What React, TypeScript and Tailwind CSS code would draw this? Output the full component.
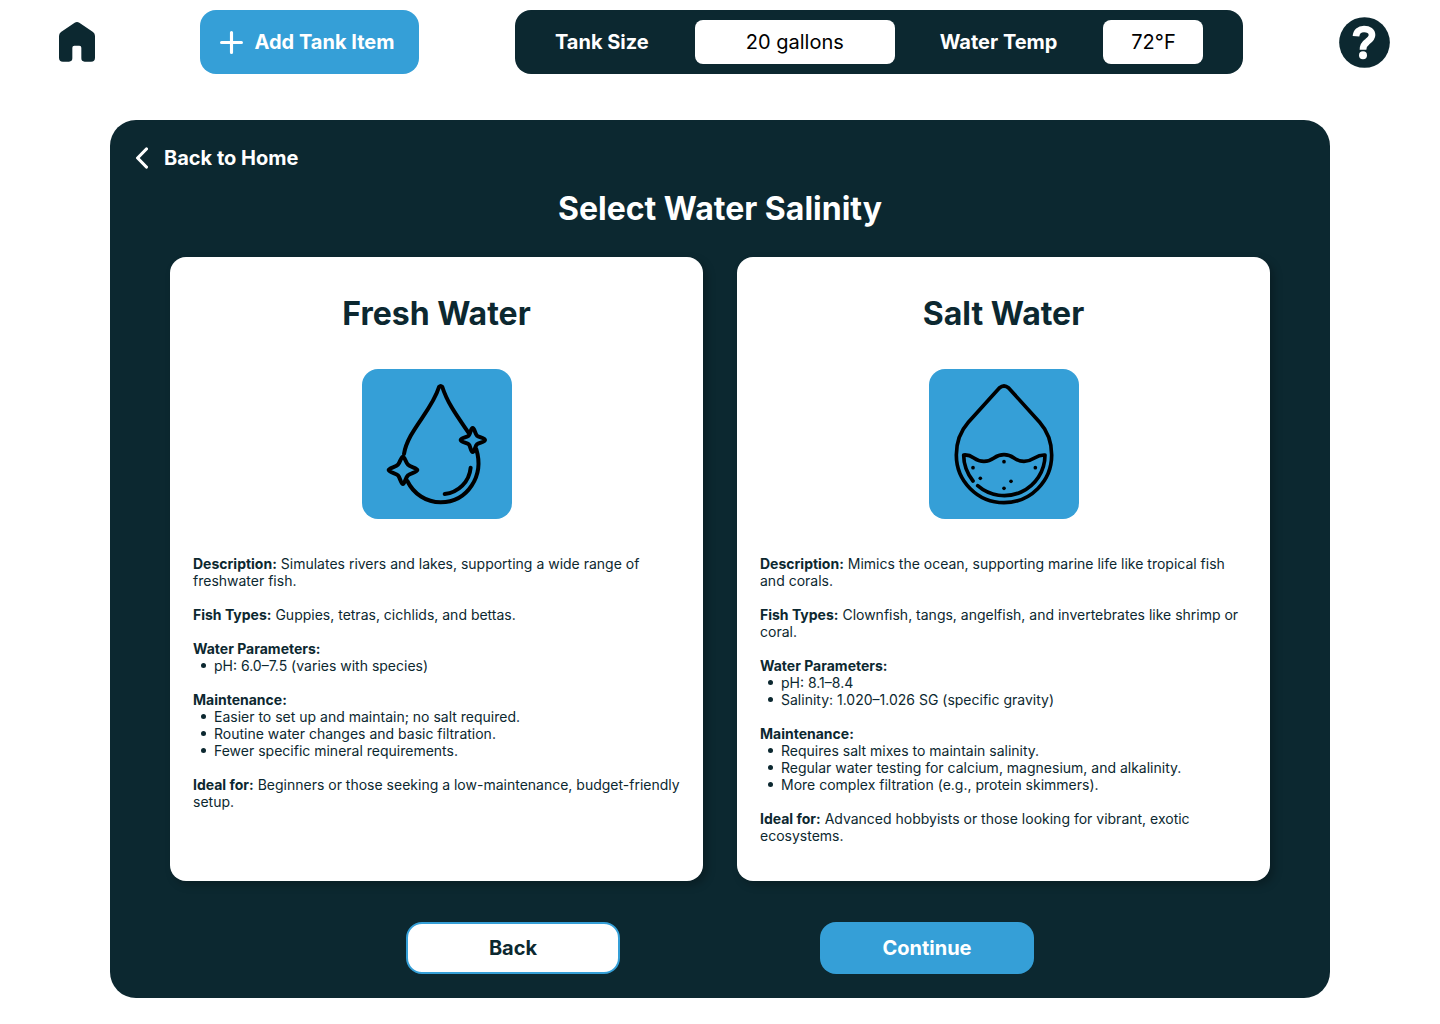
import React, { useState } from "react";

type Section = { label: string; text?: string; items?: string[] };

const freshSections: Section[] = [
  { label: "Description:", text: "Simulates rivers and lakes, supporting a wide range of freshwater fish." },
  { label: "Fish Types:", text: "Guppies, tetras, cichlids, and bettas." },
  { label: "Water Parameters:", items: ["pH: 6.0–7.5 (varies with species)"] },
  {
    label: "Maintenance:",
    items: [
      "Easier to set up and maintain; no salt required.",
      "Routine water changes and basic filtration.",
      "Fewer specific mineral requirements.",
    ],
  },
  { label: "Ideal for:", text: "Beginners or those seeking a low-maintenance, budget-friendly setup." },
];

const saltSections: Section[] = [
  { label: "Description:", text: "Mimics the ocean, supporting marine life like tropical fish and corals." },
  { label: "Fish Types:", text: "Clownfish, tangs, angelfish, and invertebrates like shrimp or coral." },
  { label: "Water Parameters:", items: ["pH: 8.1–8.4", "Salinity: 1.020–1.026 SG (specific gravity)"] },
  {
    label: "Maintenance:",
    items: [
      "Requires salt mixes to maintain salinity.",
      "Regular water testing for calcium, magnesium, and alkalinity.",
      "More complex filtration (e.g., protein skimmers).",
    ],
  },
  { label: "Ideal for:", text: "Advanced hobbyists or those looking for vibrant, exotic ecosystems." },
];

function HomeIcon() {
  return (
    <svg viewBox="0 0 108 120" className="h-10 w-9" fill="currentColor" aria-hidden="true">
      <path d="M0 42Q0 34 6 30L47 2Q54 -2 61 2L102 30Q108 34 108 42V107Q108 119 96 119H77Q67 119 67 109V77Q67 71 61 71H46Q40 71 40 77V109Q40 119 30 119H12Q0 119 0 107Z" />
    </svg>
  );
}

function HelpIcon() {
  return (
    <svg viewBox="27 21 153 153" className="size-[51px]" aria-hidden="true">
      <circle cx="103.500" cy="97.500" r="76" fill="currentColor" />
      <path
        d="M78 79C79 65 88 57 102 57C117 57 126 64 126 75C126 84 120 89 112 95C102 102 99 107 99 119"
        fill="none"
        stroke="#fff"
        strokeWidth="20"
      />
      <circle cx="99" cy="136" r="12" fill="#fff" />
    </svg>
  );
}

function FreshIcon() {
  return (
    <svg
      viewBox="35 25 450 450"
      className="h-full w-full"
      fill="none"
      stroke="#000"
      strokeWidth="12"
      strokeLinecap="round"
      strokeLinejoin="round"
      aria-hidden="true"
    >
      <path d="M161 280C172 210 245 150 266 79Q271 74 276 79C292 130 326 174 355 217" />
      <path d="M378 266C402 345 352 425 271 425C228 425 190 400 171 361" />
      <path d="M361 321C357 364 324 396 283 400" />
      <path d="M158 288C163 288 166 306 173 312C179 319 201 322 201 328C201 335 179 338 173 344C166 350 163 370 158 370C152 370 149 350 143 344C137 338 115 335 115 328C115 322 137 319 143 312C149 306 152 288 158 288Z" />
      <path d="M367 202C373 202 374 220 380 225C386 230 404 232 404 238C404 244 386 246 380 251C374 256 373 274 367 274C361 274 361 256 355 251C349 246 331 244 331 238C331 232 349 230 355 225C361 220 361 202 367 202Z" />
    </svg>
  );
}

function SaltIcon() {
  return (
    <svg
      viewBox="25 25 450 450"
      className="h-full w-full"
      fill="none"
      stroke="#000"
      strokeWidth="11"
      strokeLinecap="round"
      strokeLinejoin="round"
      aria-hidden="true"
    >
      <path d="M236 82Q250 70 264 82L357 185C380 211 393 245 393 283A142.500 142.500 0 0 1 107 283C107 245 120 211 143 185Z" />
      <path d="M157 361Q129 325 129 283C160 280 158 302 190 302C222 302 218 282 250 282C282 282 278 302 310 302C342 302 342 281 373 283A122 122 0 0 1 171 375" />
      <g fill="#000" stroke="none">
        <circle cx="157" cy="321" r="5.500" />
        <circle cx="250" cy="303" r="5.500" />
        <circle cx="344" cy="321" r="5.500" />
        <circle cx="179" cy="353" r="5.500" />
        <circle cx="271" cy="362" r="5.500" />
        <circle cx="250" cy="383" r="5.500" />
      </g>
    </svg>
  );
}

function WaterCard({ title, icon, sections }: { title: string; icon: React.ReactNode; sections: Section[] }) {
  return (
    <article className="flex flex-col rounded-2xl bg-white px-[23px] py-[37px] text-[#0c2830] shadow-[4px_4px_8px_rgba(0,0,0,0.25)]">
      <h2 className="text-center text-[32px] leading-10 font-bold">{title}</h2>
      <div className="mx-auto mt-[35px] size-[150px] rounded-2xl bg-[#359fd7]">{icon}</div>
      <div className="mt-9 flex flex-col gap-[17px] text-sm leading-[17px]">
        {sections.map((s) => (
          <div key={s.label}>
            <p>
              <strong className="font-bold">{s.label}</strong> {s.text}
            </p>
            {s.items && (
              <ul className="pl-2">
                {s.items.map((item) => (
                  <li
                    key={item}
                    className="flex items-center gap-2 before:size-[5px] before:shrink-0 before:rounded-full before:bg-current before:content-['']"
                  >
                    {item}
                  </li>
                ))}
              </ul>
            )}
          </div>
        ))}
      </div>
    </article>
  );
}

export default function App() {
  const [size, setSize] = useState("20 gallons");
  const [temp, setTemp] = useState("72°F");

  return (
    <div className="min-h-screen bg-white pb-[26px] font-['Inter',sans-serif] text-[#0c2830]">
      <header className="flex items-center justify-between px-[50px] pt-2.5">
        <a href="#home" aria-label="Home" className="flex w-[54px] justify-center">
          <HomeIcon />
        </a>
        <button type="button" className="flex h-16 items-center gap-3 rounded-2xl bg-[#359fd7] pr-[25px] pl-5 text-xl font-bold text-white">
          <svg viewBox="0 0 22 22" className="size-[23px]" fill="none" stroke="currentColor" strokeWidth="3" strokeLinecap="round" aria-hidden="true">
            <path d="M11 1.500V20.500M1.500 11H20.500" />
          </svg>
          Add Tank Item
        </button>
        <div className="flex h-16 items-center rounded-2xl bg-[#0c2830] px-10 text-xl">
          <label htmlFor="tank-size" className="font-bold text-white">
            Tank Size
          </label>
          <input
            id="tank-size"
            value={size}
            onChange={(e) => setSize(e.target.value)}
            className="ml-[46px] h-11 w-[200px] rounded-lg bg-white text-center text-black"
          />
          <label htmlFor="water-temp" className="ml-[45px] font-bold text-white">
            Water Temp
          </label>
          <input
            id="water-temp"
            value={temp}
            onChange={(e) => setTemp(e.target.value)}
            className="ml-[46px] h-11 w-[100px] rounded-lg bg-white text-center text-black"
          />
        </div>
        <button type="button" aria-label="Help">
          <HelpIcon />
        </button>
      </header>

      <main className="mx-[110px] mt-[46px] rounded-[26px] bg-[#0c2830] px-[60px] pt-6 pb-6">
        <a href="#home" className="-ml-[35px] inline-flex items-center gap-4 text-xl leading-7 font-bold text-white">
          <svg viewBox="0 0 13 22" className="h-[22px] w-[13px]" fill="none" stroke="currentColor" strokeWidth="3.2" strokeLinecap="round" strokeLinejoin="round" aria-hidden="true">
            <path d="M11.400 2L2.600 11L11.400 20" />
          </svg>
          Back to Home
        </a>
        <h1 className="mt-3.5 text-center text-[32px] leading-10 font-bold text-white">Select Water Salinity</h1>
        <div className="mt-7 grid grid-cols-2 gap-[34px]">
          <WaterCard title="Fresh Water" icon={<FreshIcon />} sections={freshSections} />
          <WaterCard title="Salt Water" icon={<SaltIcon />} sections={saltSections} />
        </div>
        <div className="mt-[41px] flex justify-center gap-[200px] text-xl font-bold">
          <button type="button" className="h-[52px] w-[214px] rounded-2xl border-2 border-[#359fd7] bg-white text-[#0c2830]">
            Back
          </button>
          <button type="button" className="h-[52px] w-[214px] rounded-2xl bg-[#359fd7] text-white">
            Continue
          </button>
        </div>
      </main>
    </div>
  );
}
